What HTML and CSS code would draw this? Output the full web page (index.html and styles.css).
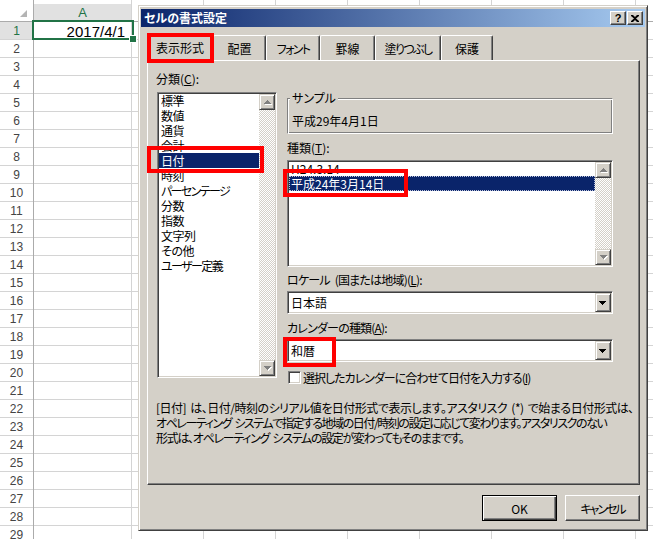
FILE: index.html
```html
<!DOCTYPE html>
<html lang="ja">
<head>
<meta charset="utf-8">
<title>セルの書式設定</title>
<link rel="stylesheet" href="styles.css">
</head>
<body>
<div class="sheet">
  <div class="colheads">
    <div class="corner"><span class="tri"></span></div>
    <div class="colhead sel">A</div>
    <div class="colrest"></div>
  </div>
  <div class="sheet-body">
    <div class="rowheads">
      <div class="rowhead sel">1</div><div class="rowhead">2</div><div class="rowhead">3</div><div class="rowhead">4</div><div class="rowhead">5</div><div class="rowhead">6</div><div class="rowhead">7</div><div class="rowhead">8</div><div class="rowhead">9</div><div class="rowhead">10</div><div class="rowhead">11</div><div class="rowhead">12</div><div class="rowhead">13</div><div class="rowhead">14</div><div class="rowhead">15</div><div class="rowhead">16</div><div class="rowhead">17</div><div class="rowhead">18</div><div class="rowhead">19</div><div class="rowhead">20</div><div class="rowhead">21</div><div class="rowhead">22</div><div class="rowhead">23</div><div class="rowhead">24</div><div class="rowhead">25</div><div class="rowhead">26</div><div class="rowhead">27</div><div class="rowhead">28</div><div class="rowhead">29</div>
    </div>
    <div class="col-a"><div class="cell">2017/4/1</div></div>
    <div class="col-rest"></div>
  </div>
</div>
<div class="cellsel"><span class="handle"></span></div>

<div class="dialog">
  <div class="titlebar">
    <span class="title">セルの書式設定</span>
    <span class="tbtn help">?</span>
    <span class="tbtn"><svg width="8" height="7" viewBox="0 0 8 7"><path d="M0 0h2l2 2 2-2h2v1L5 3.5 8 6v1H6L4 5 2 7H0V6l3-2.5L0 1z" fill="#000"/></svg></span>
  </div>
  <div class="tabs">
    <div class="tab active w66">表示形式</div>
    <div class="tab w53">配置</div>
    <div class="tab w54 kana">フォント</div>
    <div class="tab w55">罫線</div>
    <div class="tab w66 kana">塗りつぶし</div>
    <div class="tab w52">保護</div>
  </div>
  <div class="panel">
    <div class="cols">
      <div class="left">
        <div class="lbl">分類(<u>C</u>):</div>
        <div class="listbox cat">
          <div class="items">
            <div class="item">標準</div>
            <div class="item">数値</div>
            <div class="item">通貨</div>
            <div class="item">会計</div>
            <div class="item selected">日付</div>
            <div class="item">時刻</div>
            <div class="item kana">パーセンテージ</div>
            <div class="item">分数</div>
            <div class="item">指数</div>
            <div class="item">文字列</div>
            <div class="item">その他</div>
            <div class="item kana">ユーザー定義</div>
          </div>
          <div class="vscroll">
            <div class="sbtn"><svg width="14" height="14" viewBox="0 0 14 14"><path d="M8 6h1v1H8zM7 7h3v1H7zM6 8h5v1H6zM5 9h7v1H5z" fill="#fff"/><path d="M7 5h1v1H7zM6 6h3v1H6zM5 7h5v1H5zM4 8h7v1H4z" fill="#808080"/></svg></div>
            <div class="track"></div>
            <div class="sbtn"><svg width="14" height="14" viewBox="0 0 14 14"><path d="M5 6h7v1H5zM6 7h5v1H6zM7 8h3v1H7zM8 9h1v1H8z" fill="#fff"/><path d="M4 5h7v1H4zM5 6h5v1H5zM6 7h3v1H6zM7 8h1v1H7z" fill="#808080"/></svg></div>
          </div>
        </div>
      </div>
      <div class="right">
        <div class="group">
          <span class="legend">サンプル</span>
          <div class="sample">平成29年4月1日</div>
        </div>
        <div class="lbl gap6">種類(<u>T</u>):</div>
        <div class="listbox types">
          <div class="items">
            <div class="item">H24.3.14</div>
            <div class="item selected focus">平成24年3月14日</div>
          </div>
          <div class="vscroll">
            <div class="sbtn"><svg width="14" height="14" viewBox="0 0 14 14"><path d="M8 6h1v1H8zM7 7h3v1H7zM6 8h5v1H6zM5 9h7v1H5z" fill="#fff"/><path d="M7 5h1v1H7zM6 6h3v1H6zM5 7h5v1H5zM4 8h7v1H4z" fill="#808080"/></svg></div>
            <div class="track"></div>
            <div class="sbtn"><svg width="14" height="14" viewBox="0 0 14 14"><path d="M5 6h7v1H5zM6 7h5v1H6zM7 8h3v1H7zM8 9h1v1H8z" fill="#fff"/><path d="M4 5h7v1H4zM5 6h5v1H5zM6 7h3v1H6zM7 8h1v1H7z" fill="#808080"/></svg></div>
          </div>
        </div>
        <div class="lbl gap5 locale">ロケール (国または地域)(<u>L</u>):</div>
        <div class="combo">
          <span class="ctext">日本語</span>
          <span class="dd"><svg width="14" height="17" viewBox="0 0 14 17"><path d="M3 7h7v1H3zM4 8h5v1H4zM5 9h3v1H5zM6 10h1v1H6z" fill="#000"/></svg></span>
        </div>
        <div class="lbl gap6 calendar">カレンダーの種類(<u>A</u>):</div>
        <div class="combo">
          <span class="ctext">和暦</span>
          <span class="dd"><svg width="14" height="17" viewBox="0 0 14 17"><path d="M3 7h7v1H3zM4 8h5v1H4zM5 9h3v1H5zM6 10h1v1H6z" fill="#000"/></svg></span>
        </div>
        <div class="check"><span class="cb"></span><span class="check-text">選択したカレンダーに合わせて日付を入力する(<u>I</u>)</span></div>
      </div>
    </div>
    <div class="desc">
      <div class="d1">[日付] は、日付/時刻のシリアル値を日付形式で表示します。アスタリスク (*) で始まる日付形式は、</div>
      <div class="d2">オペレーティング システムで指定する地域の日付/時刻の設定に応じて変わります。アスタリスクのない</div>
      <div class="d3">形式は、オペレーティング システムの設定が変わってもそのままです。</div>
    </div>
  </div>
  <div class="buttons">
    <div class="btn default">OK</div>
    <div class="btn kana-btn">キャンセル</div>
  </div>
</div>

<div class="mark mark-tab"></div>
<div class="mark mark-cat"></div>
<div class="mark mark-type"></div>
<div class="mark mark-cal"></div>
</body>
</html>
```

FILE: styles.css
```css
* { box-sizing: border-box; }
body {
  margin: 0;
  width: 653px;
  height: 539px;
  overflow: hidden;
  background: #fff;
  position: relative;
  font-family: "Liberation Sans", Arial, sans-serif;
}

/* ---------- spreadsheet ---------- */
.sheet { width: 653px; height: 539px; overflow: hidden; }
.colheads {
  display: flex;
  height: 22px;
  border-bottom: 1px solid #ababab;
}
.corner {
  width: 34px;
  flex: none;
  border-right: 1px solid #ababab;
  display: flex;
  justify-content: flex-end;
  align-items: flex-end;
  padding: 0 6px 4px 0;
}
.tri {
  width: 0;
  height: 0;
  border-left: 7px solid transparent;
  border-bottom: 7px solid #b4b4b4;
}
.colhead {
  width: 98px;
  flex: none;
  border-right: 1px solid #d4d4d4;
  text-align: center;
  font-size: 13px;
  line-height: 17px;
  padding-top: 4px;
  color: #444;
}
.colhead.sel {
  background: linear-gradient(#fff 4px, #e1e1e1 4px);
  color: #217346;
}
.colrest {
  flex: 1;
  background: repeating-linear-gradient(to right, transparent 0 71px, #d4d4d4 71px 72px);
}
.sheet-body { display: flex; height: 517px; }
.rowheads {
  width: 34px;
  flex: none;
  border-right: 1px solid #ababab;
}
.rowhead {
  height: 18px;
  border-bottom: 1px solid #d4d4d4;
  text-align: center;
  font-size: 12px;
  line-height: 19px;
  color: #444;
}
.rowhead.sel { background: #e1e1e1; color: #217346; }
.col-a {
  width: 98px;
  flex: none;
  border-right: 1px solid #d4d4d4;
  background: repeating-linear-gradient(to bottom, transparent 0 17px, #d4d4d4 17px 18px);
}
.cell {
  height: 17px;
  text-align: right;
  padding-right: 6px;
  font-size: 15px;
  line-height: 19px;
  color: #000;
}
.col-rest {
  flex: 1;
  background:
    repeating-linear-gradient(to right, transparent 0 71px, #d4d4d4 71px 72px),
    repeating-linear-gradient(to bottom, transparent 0 17px, #d4d4d4 17px 18px);
}
.cellsel {
  position: absolute;
  left: 32px;
  top: 20px;
  width: 102px;
  height: 20px;
  border: 2px solid #217346;
}
.handle {
  position: absolute;
  right: -4px;
  bottom: -4px;
  width: 6px;
  height: 6px;
  background: #217346;
  outline: 1px solid #fff;
}

/* ---------- dialog ---------- */
.dialog {
  position: absolute;
  left: 138px;
  top: 5px;
  width: 510px;
  height: 526px;
  background: #d4d0c8;
  border: 1px solid;
  border-color: #d4d0c8 #404040 #404040 #d4d0c8;
  box-shadow: inset 1px 1px #fff, inset -1px -1px #808080;
  padding: 3px 2px 2px 2px;
  font-family: "Noto Sans CJK JP", sans-serif;
  font-size: 12px;
  color: #000;
  font-feature-settings: "palt";
}
.titlebar {
  height: 18px;
  display: flex;
  align-items: center;
  background: linear-gradient(to right, #0a246a, #a6caf0);
  padding: 0 2px 0 3px;
}
.title {
  flex: 1;
  color: #fff;
  font-weight: bold;
  font-size: 12px;
  line-height: 18px;
}
.tbtn {
  width: 16px;
  height: 14px;
  background: #d4d0c8;
  border: 1px solid;
  border-color: #fff #404040 #404040 #fff;
  box-shadow: inset -1px -1px #808080;
  display: flex;
  align-items: center;
  justify-content: center;
  font-family: "Liberation Sans", Arial, sans-serif;
  font-weight: bold;
  font-size: 11px;
  line-height: 12px;
}
.tbtn.help { margin-right: 1px; }

.tabs {
  display: flex;
  align-items: flex-end;
  height: 27px;
  margin: 6px 0 0 6px;
  position: relative;
  z-index: 1;
}
.tab {
  height: 25px;
  border: 1px solid;
  border-color: #fff #404040 transparent #fff;
  border-bottom: none;
  border-radius: 2px 2px 0 0;
  box-shadow: inset -1px 0 #808080;
  display: flex;
  align-items: center;
  justify-content: center;
  background: #d4d0c8;
  white-space: nowrap;
  padding-top: 1px;
}
.tab.kana { letter-spacing: -1.6px; }
.tab.active { height: 28px; margin-bottom: -1px; padding-bottom: 2px; }
.w52 { width: 52px; }
.w53 { width: 53px; }
.w54 { width: 54px; }
.w55 { width: 55px; }
.w66 { width: 66px; }

.panel {
  margin-left: 6px;
  width: 493px;
  height: 425px;
  border: 1px solid;
  border-color: #fff #404040 #404040 #fff;
  box-shadow: inset -1px -1px #808080;
  padding: 10px 8px 0 8px;
}
.cols { display: flex; gap: 10px; height: 314px; }
.left { width: 121px; flex: none; }
.right { width: 326px; flex: none; }
.lbl { line-height: 15px; white-space: nowrap; }
.lbl.locale { letter-spacing: -0.8px; word-spacing: 3px; }
.lbl.calendar { letter-spacing: -0.8px; }
.gap6 { margin-top: 6px; }
.gap5 { margin-top: 5px; }

.listbox {
  display: flex;
  background: #fff;
  border: 1px solid;
  border-color: #808080 #fff #fff #808080;
  box-shadow: inset 1px 1px #404040, inset -1px -1px #d4d0c8;
  padding: 1px;
}
.listbox.cat { margin: 6px 0 0 1px; width: 120px; height: 286px; }
.listbox.types { margin-top: 5px; width: 326px; height: 107px; }
.items { flex: 1; margin-top: -1px; min-width: 0; }
.item {
  height: 15px;
  line-height: 15px;
  padding-left: 2px;
  white-space: nowrap;
}
.cat .item { letter-spacing: -0.5px; }
.cat .item.kana { letter-spacing: -1.6px; }
.item.selected { background: #0a246a; color: #fff; }
.item.focus { outline: 1px dotted #b9c2dd; outline-offset: -1px; }
.vscroll { width: 16px; display: flex; flex-direction: column; flex: none; }
.sbtn {
  width: 16px;
  height: 16px;
  flex: none;
  background: #d4d0c8;
  border: 1px solid;
  border-color: #d4d0c8 #404040 #404040 #d4d0c8;
  box-shadow: inset 1px 1px #fff, inset -1px -1px #808080;
}
.sbtn svg { display: block; }
.track {
  flex: 1;
  background: repeating-conic-gradient(#fff 0 25%, #d4d0c8 0 50%) 0 0 / 2px 2px;
}

.group {
  position: relative;
  margin-top: 27px;
  height: 36px;
  border: 1px solid;
  border-color: #808080 #fff #fff #808080;
  box-shadow: inset 1px 1px #fff, inset -1px -1px #808080;
  padding: 14px 0 0 4px;
}
.legend {
  position: absolute;
  left: 2px;
  top: -9px;
  padding: 0 2px;
  background: #d4d0c8;
  line-height: 15px;
}
.sample { line-height: 15px; }

.combo {
  margin-top: 4px;
  height: 23px;
  display: flex;
  align-items: center;
  background: #fff;
  border: 1px solid;
  border-color: #808080 #fff #fff #808080;
  box-shadow: inset 1px 1px #404040, inset -1px -1px #d4d0c8;
  padding: 1px;
}
.ctext { flex: 1; padding-left: 2px; line-height: 15px; }
.dd {
  width: 16px;
  height: 19px;
  background: #d4d0c8;
  border: 1px solid;
  border-color: #d4d0c8 #404040 #404040 #d4d0c8;
  box-shadow: inset 1px 1px #fff, inset -1px -1px #808080;
}
.dd svg { display: block; }

.check {
  margin-top: 8px;
  display: flex;
  align-items: center;
  line-height: 15px;
  white-space: nowrap;
}
.check-text { letter-spacing: -1px; }
.cb {
  width: 13px;
  height: 13px;
  margin: 0 2px 0 1px;
  background: #fff;
  border: 1px solid;
  border-color: #808080 #fff #fff #808080;
  box-shadow: inset 1px 1px #404040, inset -1px -1px #d4d0c8;
}

.desc {
  margin-top: 15px;
  line-height: 15px;
  white-space: nowrap;
  word-spacing: 2px;
}
.d1 { letter-spacing: -0.5px; }
.d2 { letter-spacing: -1.45px; }
.d3 { letter-spacing: -1.3px; }

.buttons {
  display: flex;
  justify-content: flex-end;
  gap: 8px;
  margin: 10px 5px 0 0;
}
.btn {
  width: 75px;
  height: 26px;
  display: flex;
  align-items: center;
  justify-content: center;
  border: 1px solid;
  border-color: #fff #404040 #404040 #fff;
  box-shadow: inset -1px -1px #808080;
}
.btn.kana-btn { letter-spacing: -2px; }
.btn.default {
  border-color: #000;
  box-shadow: inset 1px 1px #fff, inset -1px -1px #404040, inset -2px -2px #808080;
}

/* ---------- red annotation boxes ---------- */
.mark { position: absolute; z-index: 2; border: 4px solid #f00; }
.mark-tab { left: 147px; top: 33px; width: 67px; height: 30px; }
.mark-cat { left: 147px; top: 146px; width: 117px; height: 27px; }
.mark-type { left: 283px; top: 169px; width: 125px; height: 28px; }
.mark-cal { left: 283px; top: 337px; width: 53px; height: 30px; }
```
